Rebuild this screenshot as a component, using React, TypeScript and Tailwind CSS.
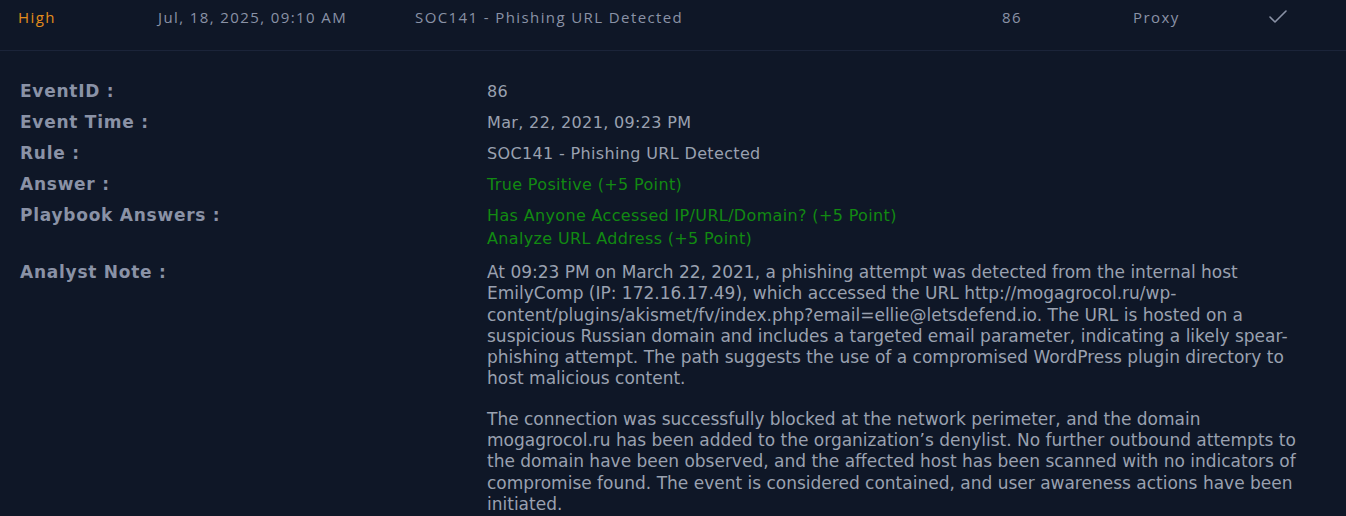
import { Check } from "lucide-react";

const rows: { label: string; values: string[]; green?: boolean }[] = [
  { label: "EventID :", values: ["86"] },
  { label: "Event Time :", values: ["Mar, 22, 2021, 09:23 PM"] },
  { label: "Rule :", values: ["SOC141 - Phishing URL Detected"] },
  { label: "Answer :", values: ["True Positive (+5 Point)"], green: true },
  {
    label: "Playbook Answers :",
    values: [
      "Has Anyone Accessed IP/URL/Domain? (+5 Point)",
      "Analyze URL Address (+5 Point)",
    ],
    green: true,
  },
];

const note1 =
  "At 09:23 PM on March 22, 2021, a phishing attempt was detected from the internal host EmilyComp (IP: 172.16.17.49), which accessed the URL http://mogagrocol.ru/wp-content/plugins/akismet/fv/index.php?email=ellie@letsdefend.io. The URL is hosted on a suspicious Russian domain and includes a targeted email parameter, indicating a likely spear-phishing attempt. The path suggests the use of a compromised WordPress plugin directory to host malicious content.";
const note2 =
  "The connection was successfully blocked at the network perimeter, and the domain mogagrocol.ru has been added to the organization\u2019s denylist. No further outbound attempts to the domain have been observed, and the affected host has been scanned with no indicators of compromise found. The event is considered contained, and user awareness actions have been initiated.";

export default function App() {
  return (
    <div className="min-h-screen w-full bg-[#0f1727] font-['Open_Sans',sans-serif]">
      {/* alert row */}
      <div className="flex h-[51px] items-start border-b border-[#1b2439] pt-[6px] text-[15px] tracking-[1.4px] text-[#8a92a6]">
        <div className="w-[158px] pl-[18px] text-[#e38c1b]">High</div>
        <div className="w-[257px]">Jul, 18, 2025, 09:10 AM</div>
        <div className="w-[587px]">SOC141 - Phishing URL Detected</div>
        <div className="w-[131px]">86</div>
        <div className="w-[133px]">Proxy</div>
        <Check className="mt-[-1px] h-[24px] w-[24px]" strokeWidth={1.6} />
      </div>

      {/* details */}
      <div className="grid grid-cols-[467px_1fr] gap-y-[8px] pl-[20px] pr-[21px] pt-[29px] font-['DejaVu_Sans',sans-serif]">
        {rows.map((r) => (
          <div key={r.label} className="contents">
            <div className="text-[17px] font-bold leading-[23px] tracking-[0.75px] text-[#8a92a6]">
              {r.label}
            </div>
            <div
              className={`text-[16px] leading-[23px] tracking-[0.35px] ${
                r.green ? "text-[#128a12]" : "text-[#9aa1b0]"
              }`}
            >
              {r.values.map((v) => (
                <div key={v}>{v}</div>
              ))}
            </div>
          </div>
        ))}
        <div className="pt-[3px] text-[17px] font-bold leading-[23px] tracking-[0.75px] text-[#8a92a6]">
          Analyst Note :
        </div>
        <div className="pt-[4px] text-[17px] leading-[21.3px] text-[#9aa1b0]">
          <p>{note1}</p>
          <p className="mt-[19px]">{note2}</p>
        </div>
      </div>
    </div>
  );
}
